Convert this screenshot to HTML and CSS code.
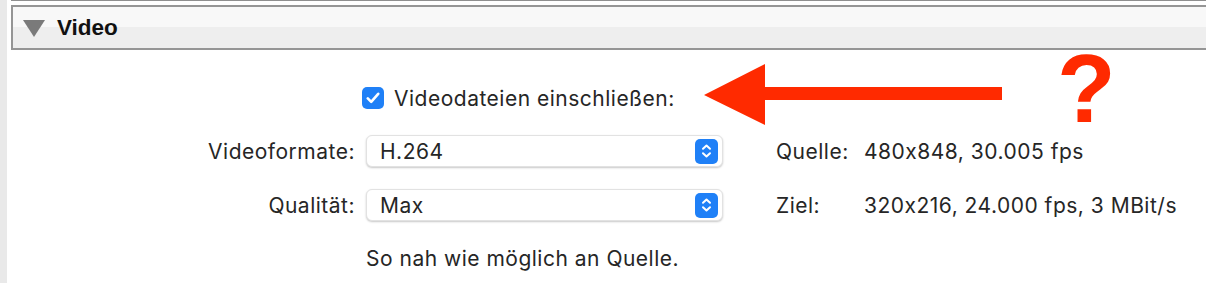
FILE: index.html
```html
<!DOCTYPE html>
<html lang="de">

<head>
    <meta charset="UTF-8">
    <title>Video</title>
    <link rel="stylesheet" href="styles.css">
</head>

<body>
    <div class="page">
        <div class="strip"></div>
        <div class="main">
            <div class="section-head">
                <span class="disclosure"></span>
                <span class="section-title">Video</span>
            </div>

            <div class="content">
                <div class="check-row">
                    <span class="checkbox">
                        <svg width="14" height="12" viewBox="0 0 14 12">
                            <path d="M1.8 6.4 L5.2 9.8 L12.2 1.8" fill="none" stroke="#fff" stroke-width="2.6" stroke-linecap="round" stroke-linejoin="round"/>
                        </svg>
                    </span>
                    <span>Videodateien einschließen:</span>
                </div>

                <div class="label">Videoformate:</div>
                <div class="select">
                    <span>H.264</span>
                    <span class="stepper">
                        <svg width="11" height="16" viewBox="0 0 11 16">
                            <path d="M2 5.8 L5.5 2.5 L9 5.8 M2 10.2 L5.5 13.5 L9 10.2" fill="none" stroke="#fff" stroke-width="2" stroke-linecap="round" stroke-linejoin="round"/>
                        </svg>
                    </span>
                </div>
                <div class="info-label">Quelle:</div>
                <div class="info-value">480x848, 30.005 fps</div>

                <div class="label">Qualität:</div>
                <div class="select">
                    <span>Max</span>
                    <span class="stepper">
                        <svg width="11" height="16" viewBox="0 0 11 16">
                            <path d="M2 5.8 L5.5 2.5 L9 5.8 M2 10.2 L5.5 13.5 L9 10.2" fill="none" stroke="#fff" stroke-width="2" stroke-linecap="round" stroke-linejoin="round"/>
                        </svg>
                    </span>
                </div>
                <div class="info-label">Ziel:</div>
                <div class="info-value">320x216, 24.000 fps, 3 MBit/s</div>

                <div class="hint">So nah wie möglich an Quelle.</div>
            </div>

            <!-- Anmerkung: roter Pfeil und Fragezeichen -->
            <svg class="arrow" width="300" height="62" viewBox="0 0 300 62">
                <polygon points="0,31 61,0 61,23 298,23 298,36 61,36 61,61" fill="#ff2a00"/>
            </svg>
            <span class="question">?</span>
        </div>
    </div>
</body>

</html>
```

FILE: styles.css
```css
* {
    margin: 0;
    padding: 0;
    box-sizing: border-box;
}

body {
    background: #fff;
    font-family: "Inter", "Liberation Sans", sans-serif;
    font-size: 21px;
    letter-spacing: 0.5px;
    font-feature-settings: "calt" 0;
    color: #262626;
}

.page {
    display: flex;
    height: 283px;
    overflow: hidden;
}

.strip {
    width: 7px;
    background-color: #e9e9e9;
    flex-shrink: 0;
}

.main {
    flex: 1;
    position: relative;
    padding-left: 4px;
}

.main::before {
    content: "";
    display: block;
    height: 1px;
    background-color: #8f8f8f;
}

.section-head {
    margin-top: 4px;
    height: 45px;
    border: 2px solid #959595;
    border-right: none;
    background: linear-gradient(#f8f8f8 0, #f8f8f8 48%, #eeeeee 48%);
    display: flex;
    align-items: center;
    padding-left: 10px;
    gap: 12px;
}

.disclosure {
    width: 0;
    height: 0;
    border-left: 11px solid transparent;
    border-right: 11px solid transparent;
    border-top: 17px solid #7a7a7a;
    margin-top: 1px;
}

.section-title {
    font-family: "Liberation Sans", Arial, sans-serif;
    font-weight: bold;
    font-size: 22.5px;
    letter-spacing: 0;
    color: #111;
}

.content {
    display: grid;
    grid-template-columns: 355px 357px 141px auto;
    grid-auto-rows: 32px;
    row-gap: 22px;
    padding-top: 31px;
    align-items: center;
}

.check-row {
    grid-column: 2 / 5;
    display: flex;
    align-items: center;
    gap: 10px;
    margin-left: -4px;
    margin-bottom: -2px;
}

.checkbox {
    width: 22px;
    height: 22px;
    border-radius: 5px;
    background-color: #1f80f7;
    display: flex;
    align-items: center;
    justify-content: center;
}

.label {
    grid-column: 1;
    text-align: right;
    padding-right: 11px;
}

.select {
    grid-column: 2;
    height: 32px;
    background: #fff;
    border-radius: 6px;
    border: 1px solid #e2e2e2;
    box-shadow: 0 1px 2px rgba(0, 0, 0, 0.22);
    display: flex;
    align-items: center;
    justify-content: space-between;
    padding: 0 4px 0 13px;
}

.stepper {
    width: 23px;
    height: 25px;
    border-radius: 5px;
    background-color: #1f80f7;
    display: flex;
    align-items: center;
    justify-content: center;
}

.info-label {
    grid-column: 3;
    padding-left: 53px;
}

.info-value {
    grid-column: 4;
}

.hint {
    grid-column: 2 / 5;
    height: 24px;
    line-height: 24px;
}

.arrow {
    position: absolute;
    left: 697px;
    top: 64px;
}

.question {
    position: absolute;
    left: 1050px;
    top: 41px;
    font-family: "Liberation Sans", Arial, sans-serif;
    font-weight: bold;
    font-size: 96px;
    line-height: 1;
    letter-spacing: 0;
    color: #ff2a00;
}
```
